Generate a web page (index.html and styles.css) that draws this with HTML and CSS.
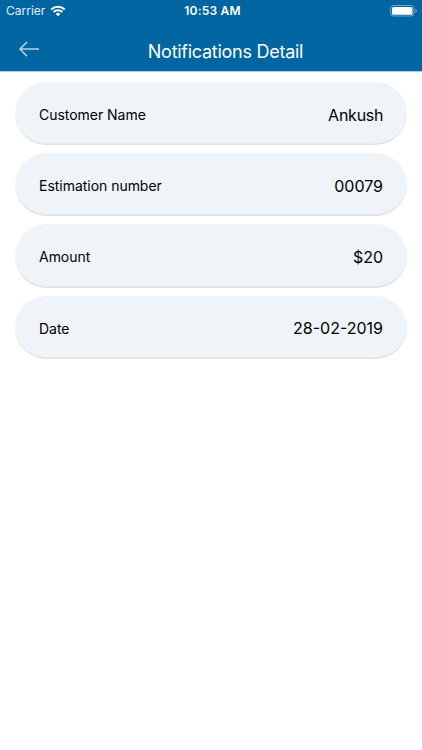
FILE: index.html
```html
<!DOCTYPE html>
<html lang="en">
<head>
<meta charset="utf-8">
<title>Notifications Detail</title>
<link rel="stylesheet" href="styles.css">
</head>
<body>
<header class="header">
  <div class="status">
    <div class="carrier"><span class="carrier-name">Carrier</span>
      <svg class="wifi" viewBox="0 0 16 12" width="16" height="12"><path d="M8 11.300 5.700 8.900a3.400 3.400 0 0 1 4.600 0z" fill="#fff"/><path d="M3.600 6.900a6.400 6.400 0 0 1 8.800 0M1.300 4.500a9.700 9.700 0 0 1 13.400 0" fill="none" stroke="#fff" stroke-width="2"/></svg>
    </div>
    <div class="time">10:53 AM</div>
    <div class="battery"><svg viewBox="0 0 28 12" width="28" height="12"><rect x=".5" y=".5" width="23.500" height="10.500" rx="3" fill="none" stroke="#70a7ca"/><rect x="2" y="2" width="20.500" height="7.700" rx="1.500" fill="#fff"/><path d="M25.300 4v4q1.500-.6 1.500-2t-1.500-2" fill="#70a7ca"/></svg></div>
  </div>
  <div class="nav">
    <svg class="back" viewBox="0 0 22 18" width="22" height="18"><path d="M21 9H2M9 2 2 9l7 7.200" fill="none" stroke="#b5d0e8" stroke-width="1.600"/></svg>
    <h1 class="title">Notifications Detail</h1>
  </div>
</header>
<main class="list">
  <div class="row"><span class="label">Customer Name</span><span class="value name">Ankush</span></div>
  <div class="row"><span class="label">Estimation number</span><span class="value">00079</span></div>
  <div class="row"><span class="label">Amount</span><span class="value">$20</span></div>
  <div class="row"><span class="label">Date</span><span class="value">28-02-2019</span></div>
</main>
</body>
</html>
```
FILE: styles.css
```css
* { box-sizing: border-box; }
body { margin: 0; min-height: 750px; background: #fff; color: #000; font-family: Inter, "Liberation Sans", sans-serif; }
.header { height: 72px; background: #0065a0; color: #fff; border-bottom: 1px solid #a9cbe0; }
.status { display: grid; grid-template-columns: 1fr 80px 1fr; height: 21px; align-items: center; padding: 0 4px 0 6px; }
.carrier { display: flex; align-items: center; gap: 5px; font-size: 12px; color: #e4f0f8; }
.wifi { margin-top: 0; }
.time { text-align: center; font-size: 12px; font-weight: 600; letter-spacing: .2px; padding-left: 1px; }
.battery { display: flex; justify-content: flex-end; }
.nav { display: grid; grid-template-columns: 40px 1fr 29px; height: 50px; align-items: center; padding-left: 18px; }
.back { margin-top: 5px; }
.title { margin: 11px 0 0; text-align: center; font-size: 18px; font-weight: 400; letter-spacing: -.27px; }
.list { display: flex; flex-direction: column; gap: 8px; padding: 10px 15px 0; }
.row { display: flex; align-items: center; justify-content: space-between; height: 63.200px; padding: 2px 24px 0; border-radius: 32px; background: #eff4f9; box-shadow: inset 0 -2px 1px -.5px #dfe0e4; }
.label { font-size: 14px; letter-spacing: -.03px; }
.value { font-size: 16px; }
.name { letter-spacing: -.25px; margin-right: -.25px; }
```
